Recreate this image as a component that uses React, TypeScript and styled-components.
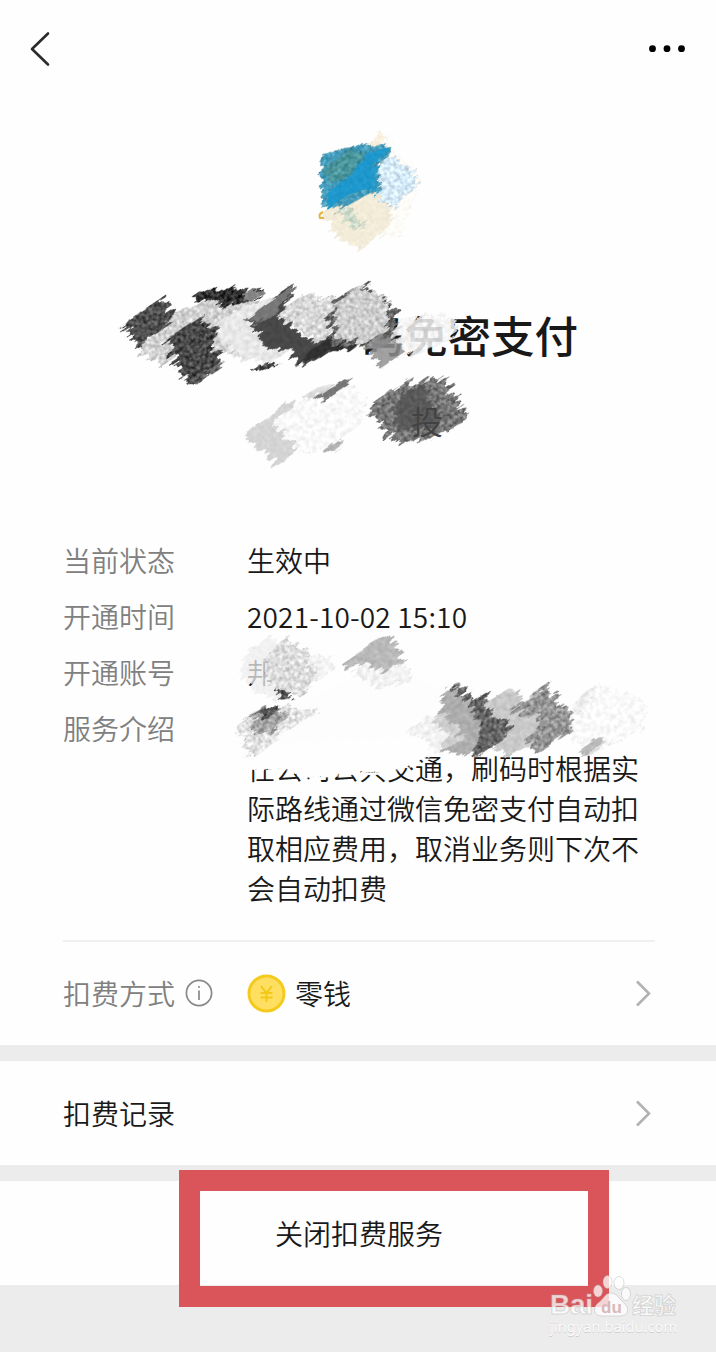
import React from "react";
import styled, { createGlobalStyle } from "styled-components";

const GlobalStyle = createGlobalStyle`
  * { box-sizing: border-box; }
  body {
    margin: 0;
    background: #ececec;
    color: #191919;
    font-family: "Noto Sans CJK SC", sans-serif;
    font-size: 28px;
    font-weight: 350;
    line-height: 40px;
  }
`;

const Page = styled.main`
  position: relative;
  width: 716px;
  height: 1352px;
  overflow: hidden;
  background: #ececec;
`;

const Section = styled.section<{ $height: number; $gap?: number }>`
  height: ${(p) => p.$height}px;
  margin-bottom: ${(p) => p.$gap ?? 0}px;
  background: #fefefe;
`;

const TopBar = styled.header`
  display: flex;
  justify-content: space-between;
  align-items: center;
  height: 97px;
  padding: 0 30px;
`;

const Hero = styled.div`
  display: flex;
  flex-direction: column;
  align-items: center;
  height: 443px;
  padding-top: 33px;
`;

const Logo = styled.svg`
  margin-left: 20px;
`;

const Title = styled.h1`
  width: 440px;
  margin: 53px 0 0;
  text-align: right;
  font-size: 43.5px;
  font-weight: 500;
  line-height: 60px;
`;

const Subtitle = styled.div`
  position: relative;
  z-index: 1;
  width: 440px;
  padding-left: 273px;
  margin-top: 33px;
  color: #424242;
  font-size: 32px;
  line-height: 44px;
`;

const Details = styled.dl`
  display: grid;
  grid-template-columns: 184px 392px;
  align-content: start;
  row-gap: 16px;
  height: 402px;
  margin: 0 61px 0 63px;
  border-bottom: 2px solid #f0f0f0;
`;

const Label = styled.dt`
  color: #808080;
`;

const Value = styled.dd<{ $tall?: boolean; $numeric?: boolean }>`
  margin: 0;
  padding-top: ${(p) => (p.$tall ? 40 : 0)}px;
  letter-spacing: ${(p) => (p.$numeric ? "0.17px" : "normal")};
`;

const PaymentRow = styled.div`
  display: flex;
  align-items: center;
  height: 102px;
  padding: 0 65px 0 63px;
`;

const PaymentLabel = styled.div`
  display: flex;
  align-items: center;
  gap: 10px;
  width: 184px;
  color: #808080;
`;

const PaymentValue = styled.div`
  display: flex;
  flex: 1;
  align-items: center;
  gap: 9px;
`;

const LinkRow = styled.div<{ $center?: boolean }>`
  display: flex;
  align-items: center;
  justify-content: ${(p) => (p.$center ? "center" : "space-between")};
  height: 100%;
  padding: ${(p) => (p.$center ? "0 0 0 2px" : "0 65px 0 63px")};
`;

const Highlight = styled.div`
  position: absolute;
  left: 179px;
  top: 1170px;
  width: 430px;
  height: 137px;
  border: 21px solid #da555a;
`;

const Artwork = styled.svg`
  position: absolute;
  left: 0;
  top: 0;
  pointer-events: none;
`;

const Mark = styled.svg`
  position: absolute;
  left: 540px;
  top: 1270px;
`;

const Arrow = () => (
  <svg width="16" height="28" viewBox="0 0 16 28" fill="none" stroke="#b2b2b2" strokeWidth="2.6">
    <path d="M2 2.5 L14 14.5 L2 26.5" />
  </svg>
);

const GrainFilter = ({ id, freq, scale, grain, seed }: { id: string; freq: number; scale: number; grain: number; seed: number }) => (
  <filter id={id} x="-30%" y="-30%" width="160%" height="160%" colorInterpolationFilters="sRGB">
    <feTurbulence type="fractalNoise" baseFrequency="0.05 0.24" numOctaves="3" seed={seed} />
    <feColorMatrix values="1 0 0 0 0  0 0.35 0 0 0.325  0 0 0 0 0  0 0 0 0 1" result="wave" />
    <feDisplacementMap in="SourceGraphic" in2="wave" scale={scale} xChannelSelector="R" yChannelSelector="G" result="rough" />
    <feTurbulence type="fractalNoise" baseFrequency={freq} numOctaves="2" seed={seed + 5} />
    <feColorMatrix values="1 0 0 0 0  1 0 0 0 0  1 0 0 0 0  0 0 0 0 1" result="noise" />
    <feComposite in="rough" in2="noise" operator="arithmetic" k2="1" k3={grain} k4={-grain / 2} />
    <feComposite in2="rough" operator="in" />
  </filter>
);

type Dab = [points: string, fill: string, filter: string, opacity?: number];

const logoDabs: Dab[] = [
  ["358,158 378,133 388,138 392,150 412,168 419,180 412,208 400,238 380,238", "#fefcf7", "soft"],
  ["320,214 352,192 381,192 391,214 391,222 374,240 358,252 344,244", "#f3ecd8", "soft"],
  ["364,150 379,133 386,136 370,154", "#f8f0dc", "soft"],
  ["376,170 389,158 399,161 417,177 416,187 403,197 396,210 378,200", "#d6ebfa", "mottle"],
  ["320,157 348,148 361,145 390,147 391,153 378,166 379,191 374,194 366,196 344,209 322,207", "#459dbb", "dye"],
  ["326,168 353,148 366,155 351,180 326,184", "#4c9292", "dye", 0.75],
  ["326,197 349,177 370,151 391,148 375,164 372,190 350,194 328,210", "#1e98cc", "soft"],
  ["371,164 376,164 378,197 374,196", "#259acb", "soft"],
  ["335,213 349,209 356,217 365,228 354,231", "#c2d7c7", "mottle", 0.7],
];

const titleDabs: Dab[] = [
  ["139,346 176,312 228,292 262,303 274,345 245,359 193,343 164,363 143,356", "#d2d2d2", "mottle"],
  ["123,326 148,306 162,298 168,306 178,311 165,328 147,338 141,348", "#505050", "grain"],
  ["190,297 200,290 220,290 240,290 266,290 258,300 230,304 203,300", "#303030", "grain"],
  ["236,298 252,288 266,294 252,300", "#858585", "light"],
  ["216,326 246,305 278,296 300,340 276,361 244,360 223,345", "#e8e8e8", "light"],
  ["165,339 201,318 216,327 211,345 221,360 206,376 193,386 178,371", "#494949", "grain"],
  ["207,371 226,360 220,371 199,379", "#626262", "grain"],
  ["252,367 270,362 282,364 262,370", "#3c3c3c", "grain"],
  ["248,318 272,300 288,285 296,290 280,314 297,332 330,344 353,332 351,342 327,354 301,368 287,350 265,346", "#484848", "soft"],
  ["249,317 289,287 296,290 270,318 255,325", "#777", "soft"],
  ["280,316 303,294 338,300 332,331 318,345 300,327", "#d8d8d8", "mottle"],
  ["310,350 346,325 364,340 350,350 330,350 298,367", "#303030", "soft"],
  ["327,320 336,302 345,292 362,286 390,301 398,319 394,338 378,350 358,343 336,352", "#626262", "grain"],
  ["334,303 357,288 364,287 385,297 390,309 388,330 371,343 336,340", "#cecece", "mottle"],
  ["363,348 380,335 402,340 404,353 382,369 376,359", "#909090", "soft", 0.85],
  ["392,332 400,320 435,313 458,320 455,337 428,349 408,357", "#f4f4f4", "light", 0.85],
  ["244,435 280,408 289,400 294,406 282,420 301,440 294,455 277,466", "#d4d4d4", "soft"],
  ["305,395 325,384 335,385 320,402", "#dcdcdc", "light"],
  ["271,420 317,394 330,390 356,388 367,404 360,426 326,449 302,454", "#f9f9f9", "light"],
  ["315,398 345,380 354,382 326,400", "#777", "soft"],
  ["325,447 340,440 346,442 332,452", "#b5b5b5", "light"],
  ["369,407 390,391 411,379 415,386 436,375 449,383 456,399 466,409 463,424 431,438 399,443 381,430", "#777", "grain"],
  ["396,404 408,390 425,384 430,403 442,417 434,431 397,430", "#505050", "soft", 0.75],
];

const detailDabs: Dab[] = [
  ["240,672 249,650 267,638 286,640 290,682 275,702 251,687", "#eeeeee", "soft", 0.75],
  ["304,653 324,655 336,668 318,680 304,682", "#f3f3f3", "light"],
  ["264,660 285,637 306,651 314,674 303,697 281,690 266,676", "#dddddd", "mottle"],
  ["275,687 292,696 309,705 296,706 279,697", "#515151", "grain"],
  ["236,728 251,713 280,700 312,696 388,665 442,688 468,703 465,750 405,762 330,766 288,765 245,767", "#fdfdfd", "plain"],
  ["236,726 255,712 287,705 320,713 315,735 270,766 250,759", "#e3e3e3", "mottle"],
  ["275,737 330,706 400,700 400,750 300,766", "#fdfdfd", "plain"],
  ["250,715 270,704 278,710 290,714 269,735 253,732", "#a4a4a4", "grain"],
  ["257,713 270,704 278,709 268,719", "#555", "grain"],
  ["352,671 372,662 410,666 410,682 374,687", "#f2f2f2", "light"],
  ["343,668 359,651 382,637 397,646 404,661 386,672 367,664", "#b9b9b9", "light"],
  ["446,691 461,684 475,698 487,695 493,707 508,716 515,724 505,742 475,757 457,740", "#666", "grain"],
  ["442,696 451,689 466,699 479,718 480,740 466,756 445,751 434,743", "#aeaeae", "light"],
  ["425,725 440,711 458,724 463,742 443,749 420,745", "#cfcfcf", "light"],
  ["410,730 430,715 448,735 436,755 405,755", "#f1f1f1", "light"],
  ["483,704 512,688 525,700 547,707 544,739 509,756 496,746 513,728", "#c9c9c9", "light"],
  ["511,712 530,696 548,685 557,699 575,716 574,730 539,751 525,742 544,719", "#969696", "grain"],
  ["572,715 594,686 622,693 645,702 642,731 616,742 589,755 572,742", "#fafafa", "light"],
  ["572,708 586,690 594,690 580,715", "#ececec", "light"],
  ["580,751 594,739 605,742 586,755", "#bababa", "light"],
  ["238,766 276,742 330,738 425,737 436,755 415,764 390,774 375,772 340,776 300,778 283,770 253,772", "#fefefe", "plain"],
];

const Filters = ({ prefix }: { prefix: string }) => (
  <defs>
    <GrainFilter id={`${prefix}-grain`} freq={0.28} scale={26} grain={0.6} seed={3} />
    <GrainFilter id={`${prefix}-dye`} freq={0.26} scale={16} grain={0.35} seed={6} />
    <GrainFilter id={`${prefix}-mottle`} freq={0.27} scale={22} grain={0.48} seed={8} />
    <GrainFilter id={`${prefix}-light`} freq={0.2} scale={22} grain={0.18} seed={21} />
    <GrainFilter id={`${prefix}-soft`} freq={0.24} scale={20} grain={0.09} seed={12} />
    <GrainFilter id={`${prefix}-plain`} freq={0.2} scale={18} grain={0.01} seed={15} />
  </defs>
);

const Dabs = ({ items, prefix }: { items: Dab[]; prefix: string }) => (
  <>
    {items.map(([points, fill, filter, opacity], i) => (
      <g key={i} transform="rotate(-34)" filter={`url(#${prefix}-${filter})`} opacity={opacity ?? 1}>
        <polygon points={points} fill={fill} transform="rotate(34)" />
      </g>
    ))}
  </>
);

export default function App() {
  return (
    <Page>
      <GlobalStyle />
      <Section $height={1045} $gap={16}>
        <TopBar>
          <svg width="20" height="36" viewBox="0 0 20 36" fill="none" stroke="#2b2b2b" strokeWidth="2.6" strokeLinecap="round" strokeLinejoin="round">
            <path d="M18 2.5 L2 18 L18 33.5" />
          </svg>
          <svg width="38" height="8" viewBox="0 0 38 8">
            <circle cx="4.5" cy="3.7" r="3.4" />
            <circle cx="19" cy="3.7" r="3.4" />
            <circle cx="33.5" cy="3.7" r="3.4" />
          </svg>
        </TopBar>
        <Hero>
          <Logo width="110" height="122" viewBox="313 131 110 122">
            <Filters prefix="logo" />
            <Dabs items={logoDabs} prefix="logo" />
            <path d="M323 213 Q318 215 320 219 L324 219" fill="none" stroke="#e2b33f" strokeWidth="2" />
          </Logo>
          <Title>码免密支付</Title>
          <Subtitle>投</Subtitle>
        </Hero>
        <Details>
          <Label>当前状态</Label>
          <Value>生效中</Value>
          <Label>开通时间</Label>
          <Value $numeric>2021-10-02 15:10</Value>
          <Label>开通账号</Label>
          <Value>邦</Value>
          <Label>服务介绍</Label>
          <Value $tall>任公司公共交通，刷码时根据实际路线通过微信免密支付自动扣取相应费用，取消业务则下次不会自动扣费</Value>
        </Details>
        <PaymentRow>
          <PaymentLabel>
            扣费方式
            <svg width="28" height="28" viewBox="0 0 28 28" fill="none" stroke="#888" strokeWidth="1.7">
              <circle cx="14" cy="14" r="12.6" />
              <path d="M14 11.5 V21" />
              <circle cx="14" cy="8" r="1" fill="#888" stroke="none" />
            </svg>
          </PaymentLabel>
          <PaymentValue>
            <svg width="39" height="39" viewBox="0 0 39 39" fill="none">
              <circle cx="19.5" cy="19.5" r="17.5" fill="#ffdf61" stroke="#f4ca1d" strokeWidth="3" />
              <path d="M14 12 L19.5 19 L25 12 M13.5 19 H25.5 M13.5 23.5 H25.5 M19.5 19 V28" stroke="#f4c816" strokeWidth="2" />
            </svg>
            零钱
          </PaymentValue>
          <Arrow />
        </PaymentRow>
      </Section>
      <Section $height={104} $gap={16}>
        <LinkRow>扣费记录<Arrow /></LinkRow>
      </Section>
      <Section $height={104}>
        <LinkRow $center>关闭扣费服务</LinkRow>
      </Section>
      <Artwork width="716" height="800" viewBox="0 0 716 800">
        <Filters prefix="page" />
        <Dabs items={titleDabs} prefix="page" />
        <Dabs items={detailDabs} prefix="page" />
      </Artwork>
      <Highlight />
      <Mark width="150" height="72" viewBox="0 0 150 72">
        <g fill="#fff" fillOpacity="0.75" stroke="#aaa" strokeOpacity="0.4" strokeWidth="1">
          <text x="10" y="44" fontFamily="Liberation Sans, sans-serif" fontWeight="700" fontSize="28" textLength="43">Bai</text>
          <ellipse cx="58" cy="21" rx="4.5" ry="6" />
          <ellipse cx="67.5" cy="12" rx="4.5" ry="6.5" />
          <ellipse cx="79" cy="13" rx="5" ry="6.5" />
          <ellipse cx="86" cy="24" rx="4.5" ry="6.5" />
          <path d="M71 23 C65 23 64 29 58 33 C52 38 54 46 62 46 H80 C89 46 90 38 84 33 C79 29 77 23 71 23Z" />
          <text x="92" y="43" fontSize="22" fontWeight="700" textLength="44">经验</text>
        </g>
        <text x="10" y="62.8" fontFamily="Noto Sans, sans-serif" fontWeight="400" fontSize="14.5" fill="#cfcfcf" textLength="127">jingyan.baidu.com</text>
        <text x="10" y="62" fontFamily="Noto Sans, sans-serif" fontWeight="400" fontSize="14.5" fill="#fafafa" textLength="127" aria-hidden="true">jingyan.baidu.com</text>
        <text x="61" y="43" fontFamily="Liberation Sans, sans-serif" fontWeight="700" fontSize="17" fill="#d8b9b9" textLength="21">du</text>
      </Mark>
    </Page>
  );
}
